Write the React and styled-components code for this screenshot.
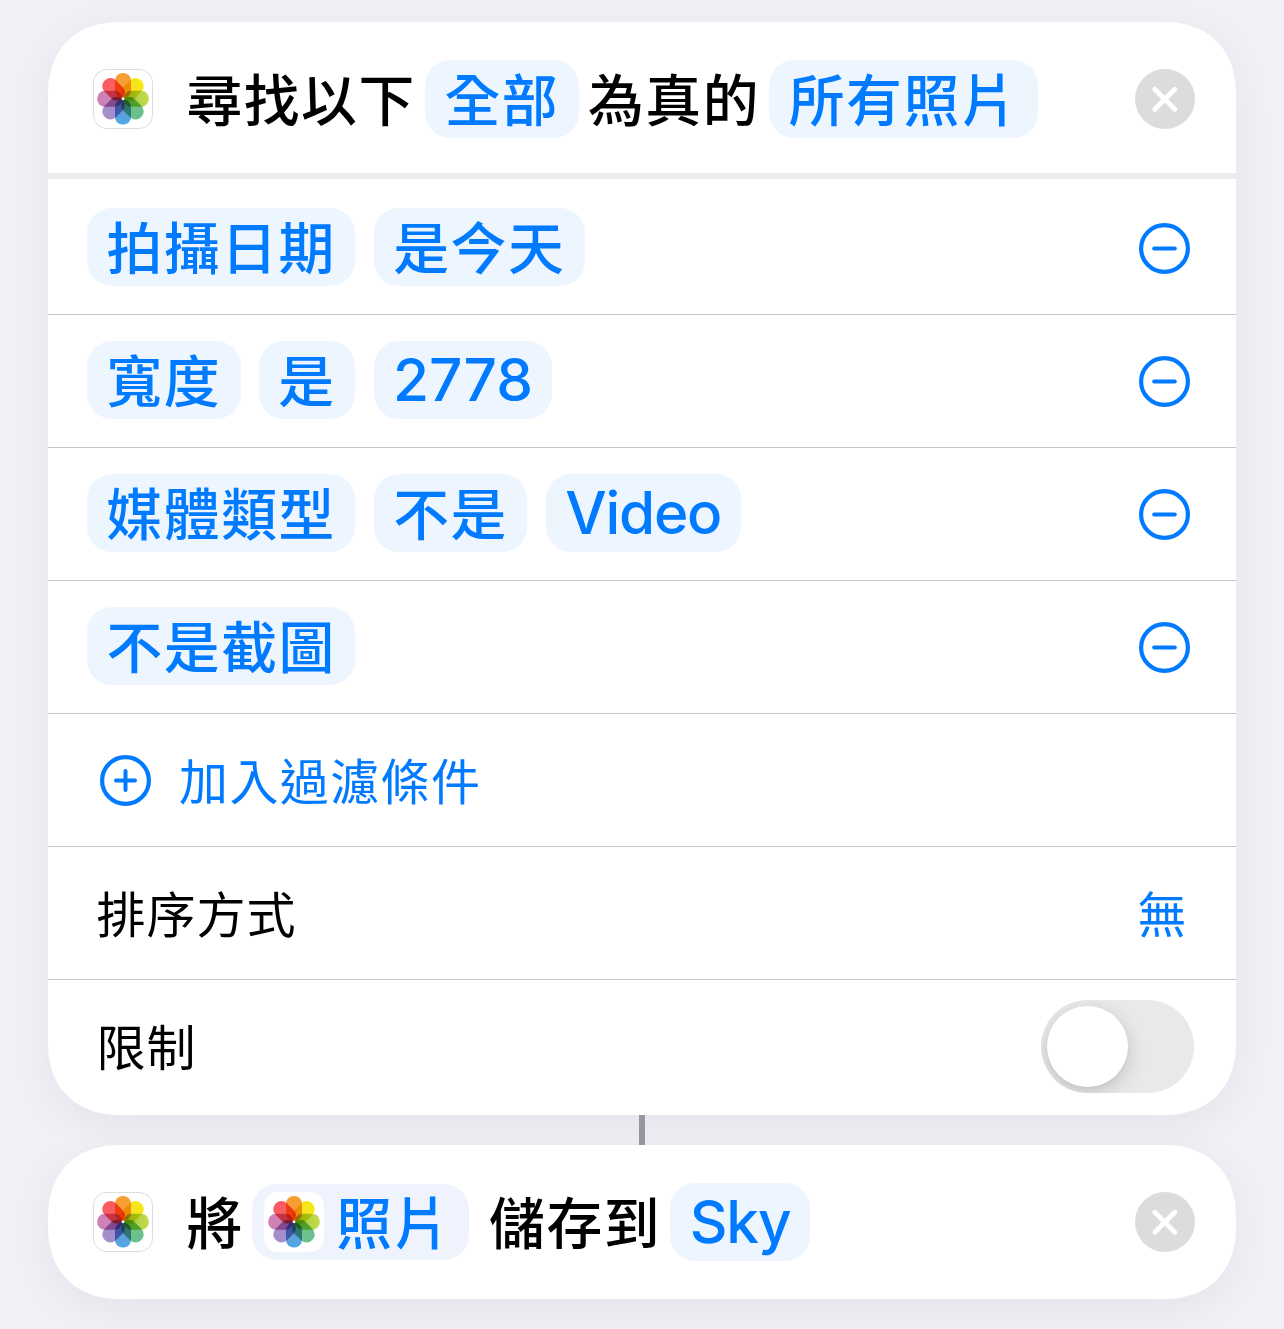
import React, { useState } from "react";
import styled, { createGlobalStyle } from "styled-components";

const GlobalStyle = createGlobalStyle`
  * {
    box-sizing: border-box;
  }

  body {
    margin: 0;
    background: #f1f0f6;
    font-family: "Inter", "Noto Sans CJK TC", sans-serif;
  }

  button {
    padding: 0;
    border: none;
    background: none;
    font: inherit;
    color: inherit;
    line-height: 0;
  }
`;

const Page = styled.main`
  height: 1329px;
  padding: 22px 48px 30px;
  display: flex;
  flex-direction: column;
  overflow: hidden;
`;

const Card = styled.section`
  flex: none;
  background: #fff;
  border-radius: 64px;
  box-shadow: 0 10px 40px rgba(20, 10, 60, 0.055);

  @supports (corner-shape: superellipse(1.2)) {
    border-radius: 74px;
    corner-shape: superellipse(1.2);
  }
`;

const ActionHeader = styled.header`
  height: ${(props) => props.$height}px;
  padding: ${(props) => props.$top}px 41px 0 45px;
  display: flex;
  align-items: center;
`;

const Sentence = styled.div`
  flex: 1;
  margin-left: 33.5px;
  display: flex;
  align-items: center;
`;

const Word = styled.span`
  padding-top: 4px;
  font-size: 55.8px;
  font-weight: 500;
  line-height: 78px;
  letter-spacing: 1.5px;
  white-space: nowrap;
`;

const Token = styled.span`
  height: 78px;
  margin: ${(props) => (props.$inline ? "-1px 9.4px 0" : "0")};
  padding: ${(props) => (props.$latin ? 0 : 4)}px 19.4px 0;
  display: inline-flex;
  align-items: center;
  border-radius: 25px;
  background: #edf5ff;
  color: #007aff;
  font-size: ${(props) => (props.$latin ? 58.5 : 55.8)}px;
  font-weight: 500;
  line-height: 78px;
  letter-spacing: ${(props) => (props.$latin ? props.$tracking : 1.6)}px;
  white-space: nowrap;
`;

const VariableToken = styled(Token)`
  height: 76px;
  margin: 0 20px 0 8px;
  padding: 0 18px 0 12px;
  gap: 12.5px;
  background: #eff3fe;
`;

const VariableName = styled.span`
  padding-top: 4px;
`;

const Band = styled.div`
  height: 6px;
  background: #ededf0;
`;

const Row = styled.div`
  height: ${(props) => (props.$first ? 136 : 133)}px;
  padding: ${(props) => (props.$first ? 3 : 0)}px 46px 0 39px;
  display: flex;
  align-items: center;
  justify-content: space-between;
  border-bottom: 1px solid #c6c6c8;
`;

const LimitRow = styled(Row)`
  height: 135px;
  padding: 0 42px 3px 39px;
  border-bottom: none;
`;

const Tokens = styled.div`
  display: flex;
  gap: 18.4px;
  margin-top: -3px;
`;

const Label = styled.span`
  margin-left: ${(props) => (props.$blue ? 10 : 9.5)}px;
  padding-top: 5px;
  color: ${(props) => (props.$blue ? "#007aff" : "#000")};
  font-size: 49px;
  line-height: 70px;
  letter-spacing: ${(props) => (props.$blue ? 1.4 : 1)}px;
  white-space: nowrap;
`;

const SortValue = styled(Label)`
  margin-right: 2px;
`;

const AddButton = styled.button`
  display: flex;
  align-items: center;
  margin-left: 13px;
  gap: 18px;
`;

const Track = styled.button`
  width: 153px;
  height: 93px;
  padding: 6px;
  display: flex;
  justify-content: ${(props) => (props.$on ? "flex-end" : "flex-start")};
  border-radius: 47px;
  background: ${(props) => (props.$on ? "#34c759" : "#e9e9eb")};
  overflow: hidden;
`;

const Knob = styled.span`
  width: 81px;
  height: 81px;
  border-radius: 50%;
  background: #fff;
  box-shadow: 0 6px 20px rgba(0, 0, 0, 0.16), 0 2px 4px rgba(0, 0, 0, 0.04);
`;

const Connector = styled.div`
  flex: none;
  align-self: center;
  width: 6px;
  height: 30px;
  background: #94979f;
  z-index: 1;
`;

const PhotosSvg = styled.svg`
  flex: none;
  display: block;
  isolation: isolate;

  .petal {
    mix-blend-mode: multiply;
  }
`;

// petals clockwise, starting from the top
const petals = [
  ["#f8a035", "#f79a2d"],
  ["#f6e814", "#f4de2a"],
  ["#c6dc48", "#98c850"],
  ["#66c08d", "#7cc48a"],
  ["#50aae6", "#6d90cc"],
  ["#a98fcb", "#9c8bc6"],
  ["#d080b4", "#c888b8"],
  ["#fb5a62", "#f4645a"],
];

function PhotosIcon({ id, framed }) {
  return (
    <PhotosSvg width="60" height="60" viewBox="0 0 60 60">
      <defs>
        {petals.map(([outer, inner], i) => (
          <linearGradient key={i} id={`${id}-${i}`} x1="0" y1="0" x2="0" y2="1">
            <stop offset="0" stopColor={outer} />
            <stop offset="1" stopColor={inner} />
          </linearGradient>
        ))}
      </defs>
      <rect
        x="0.5"
        y="0.5"
        width="59"
        height="59"
        rx="13"
        fill="#fff"
        stroke={framed ? "#dcdcde" : "#fff"}
      />
      {petals.map((_, i) => (
        <rect
          key={i}
          className="petal"
          x="22"
          y="4"
          width="16"
          height="25"
          rx="7.6"
          fill={`url(#${id}-${i})`}
          transform={`rotate(${i * 45} 30 29.8)`}
        />
      ))}
      <circle cx="30" cy="29.8" r="1.3" fill="#fff" />
    </PhotosSvg>
  );
}

function CloseIcon() {
  return (
    <svg width="60" height="60" viewBox="0 0 60 60">
      <circle cx="30" cy="30" r="30" fill="#dcdcde" />
      <path
        d="M19.8 20.3 L39.8 40.3 M39.8 20.3 L19.8 40.3"
        stroke="#fff"
        strokeWidth="4.8"
        strokeLinecap="round"
      />
    </svg>
  );
}

function CircleIcon({ plus }) {
  return (
    <svg width="51" height="51" viewBox="0 0 51 51" fill="none" stroke="#007aff">
      <circle cx="25.5" cy="25.5" r="23.4" strokeWidth="4.2" />
      <path
        d={plus ? "M16 25.5 H35 M25.5 16 V35" : "M15.2 25.5 H35.8"}
        strokeWidth="4"
        strokeLinecap="round"
      />
    </svg>
  );
}

const filters = [
  [{ text: "拍攝日期" }, { text: "是今天" }],
  [{ text: "寬度" }, { text: "是" }, { text: "2778", tracking: 0 }],
  [{ text: "媒體類型" }, { text: "不是" }, { text: "Video", tracking: -1.2 }],
  [{ text: "不是截圖" }],
];

function FilterRow({ tokens, first }) {
  return (
    <Row $first={first}>
      <Tokens>
        {tokens.map((token) => (
          <Token
            key={token.text}
            $latin={token.tracking !== undefined}
            $tracking={token.tracking}
          >
            {token.text}
          </Token>
        ))}
      </Tokens>
      <button aria-label="移除">
        <CircleIcon />
      </button>
    </Row>
  );
}

export default function App() {
  const [limit, setLimit] = useState(false);

  return (
    <>
      <GlobalStyle />
      <Page>
        <Card>
          <ActionHeader $height={151} $top={3}>
            <PhotosIcon id="find" framed />
            <Sentence>
              <Word>尋找以下</Word>
              <Token $inline>全部</Token>
              <Word>為真的</Word>
              <Token $inline>所有照片</Token>
            </Sentence>
            <button aria-label="關閉">
              <CloseIcon />
            </button>
          </ActionHeader>
          <Band />
          {filters.map((tokens, i) => (
            <FilterRow key={i} tokens={tokens} first={i === 0} />
          ))}
          <Row>
            <AddButton>
              <CircleIcon plus />
              <Label $blue>加入過濾條件</Label>
            </AddButton>
          </Row>
          <Row>
            <Label>排序方式</Label>
            <SortValue $blue>無</SortValue>
          </Row>
          <LimitRow>
            <Label>限制</Label>
            <Track
              role="switch"
              aria-checked={limit}
              $on={limit}
              onClick={() => setLimit(!limit)}
            >
              <Knob />
            </Track>
          </LimitRow>
        </Card>
        <Connector />
        <Card>
          <ActionHeader $height={154} $top={0}>
            <PhotosIcon id="save" framed />
            <Sentence>
              <Word>將</Word>
              <VariableToken>
                <PhotosIcon id="variable" />
                <VariableName>照片</VariableName>
              </VariableToken>
              <Word>儲存到</Word>
              <Token $inline $latin $tracking={-1.2}>
                Sky
              </Token>
            </Sentence>
            <button aria-label="關閉">
              <CloseIcon />
            </button>
          </ActionHeader>
        </Card>
      </Page>
    </>
  );
}
